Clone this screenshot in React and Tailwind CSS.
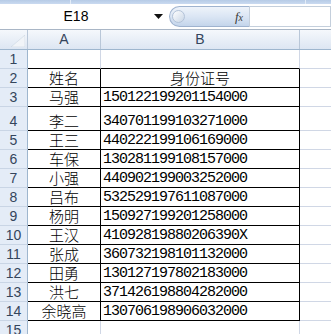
import React from 'react';

const rows = [
    { n: 1 },
    { n: 2, a: '姓名', b: '身份证号', head: true },
    { n: 3, a: '马强', b: '150122199201154000' },
    { n: 4, a: '李二', b: '340701199103271000', tall: true },
    { n: 5, a: '王三', b: '440222199106169000' },
    { n: 6, a: '车保', b: '130281199108157000' },
    { n: 7, a: '小强', b: '440902199003252000' },
    { n: 8, a: '吕布', b: '532529197611087000' },
    { n: 9, a: '杨明', b: '150927199201258000' },
    { n: 10, a: '王汉', b: '41092819880206390X' },
    { n: 11, a: '张成', b: '360732198101132000' },
    { n: 12, a: '田勇', b: '130127197802183000' },
    { n: 13, a: '洪七', b: '371426198804282000' },
    { n: 14, a: '余晓高', b: '130706198906032000' },
    { n: 15 },
];

const cjk = "font-['Noto_Sans_CJK_SC',sans-serif] font-light";

// one spreadsheet row: header number, column A, column B, rest
const Row = ({ r }) => {
    const inTable = r.n >= 2 && r.n <= 14;
    const bottom = r.n >= 1 && r.n <= 14 ? 'border-b-black' : 'border-b-[#d0d7e5]';
    const right = inTable ? 'border-r-black' : 'border-r-[#d0d7e5]';
    const h = r.tall ? 'h-[24px]' : 'h-[19px]';

    return (
        <div className={`flex ${h}`}>
            <div className="w-[28px] shrink-0 flex items-end justify-center bg-[#e4ecf7] border-r border-r-[#9eb6ce] border-b border-b-[#c9d5e5] text-[14px] leading-[17px] text-[#34455c] font-['Liberation_Sans',sans-serif]">
                {r.n}
            </div>
            <div className={`w-[73px] shrink-0 flex items-end justify-center border-r border-b ${right} ${bottom} ${cjk} text-[15px] leading-[19px] text-black`}>
                {r.a}
            </div>
            <div className={`w-[199px] shrink-0 flex items-end border-r border-b ${right} ${bottom} ${r.head ? 'justify-center ' + cjk + ' text-[15px] leading-[19px]' : "pl-[2px] font-['Liberation_Mono',monospace] text-[15px] tracking-[-1px] leading-[16px]"} text-black`}>
                {r.b}
            </div>
            <div className="flex-1 border-b border-b-[#d0d7e5]" />
        </div>
    );
};

const App = () => {
    return (
        <div className="w-[331px] h-[334px] overflow-hidden bg-white">
            {/* ribbon edge */}
            <div className="flex h-[4px] gap-[1px] bg-[#e3ecf7]">
                <div className="w-[70px] bg-gradient-to-b from-[#b6cbe6] to-[#cadaf0]" />
                <div className="w-[234px] bg-gradient-to-b from-[#b6cbe6] to-[#cadaf0]" />
                <div className="flex-1 bg-gradient-to-b from-[#b6cbe6] to-[#cadaf0]" />
            </div>

            {/* formula bar */}
            <div className="flex items-center h-[26px] border-b border-b-[#a9b6c6] bg-white">
                <div className="w-[152px] text-center text-[14px] text-black font-['Liberation_Sans',sans-serif]">E18</div>
                <svg width="9" height="5" viewBox="0 0 9 5" className="ml-[2px]">
                    <polygon points="0,0 9,0 4.5,5" fill="#111" />
                </svg>
                <div className="ml-[6px] relative w-[80px] h-[21px] rounded-l-full border border-[#9fb3cf] border-r-0 bg-gradient-to-b from-[#eef3fa] via-[#dbe6f4] to-[#c4d5eb] flex items-center justify-end pr-[6px]">
                    <div className="absolute left-[2px] top-[3px] w-[13px] h-[13px] rounded-full bg-gradient-to-br from-[#ffffff] to-[#c9d6e6] border border-[#b3c3d8]" />
                    <span className="font-['Liberation_Serif',serif] italic text-[13px] leading-none text-[#3a3a3a]">f<span className="text-[10px]">x</span></span>
                </div>
                <div className="flex-1 h-[21px] border border-[#c4cfdc] bg-white" />
            </div>

            {/* column headers */}
            <div className="flex h-[20px] border-b border-b-[#9eb6ce] bg-gradient-to-b from-[#f5f8fc] to-[#dde6f2] text-[14px] text-[#34455c] font-['Liberation_Sans',sans-serif]">
                <div className="w-[28px] shrink-0 border-r border-r-[#b9c7d8] relative">
                    <svg width="14" height="12" viewBox="0 0 14 12" className="absolute right-[2px] bottom-[2px]">
                        <polygon points="14,0 14,12 0,12" fill="#f1f4f8" stroke="#c5d0dd" strokeWidth="0.5" />
                    </svg>
                </div>
                <div className="w-[73px] shrink-0 border-r border-r-[#b9c7d8] flex items-center justify-center">A</div>
                <div className="w-[199px] shrink-0 border-r border-r-[#b9c7d8] flex items-center justify-center">B</div>
                <div className="flex-1" />
            </div>

            {rows.map((r) => (
                <Row key={r.n} r={r} />
            ))}
        </div>
    );
};

export default App;
